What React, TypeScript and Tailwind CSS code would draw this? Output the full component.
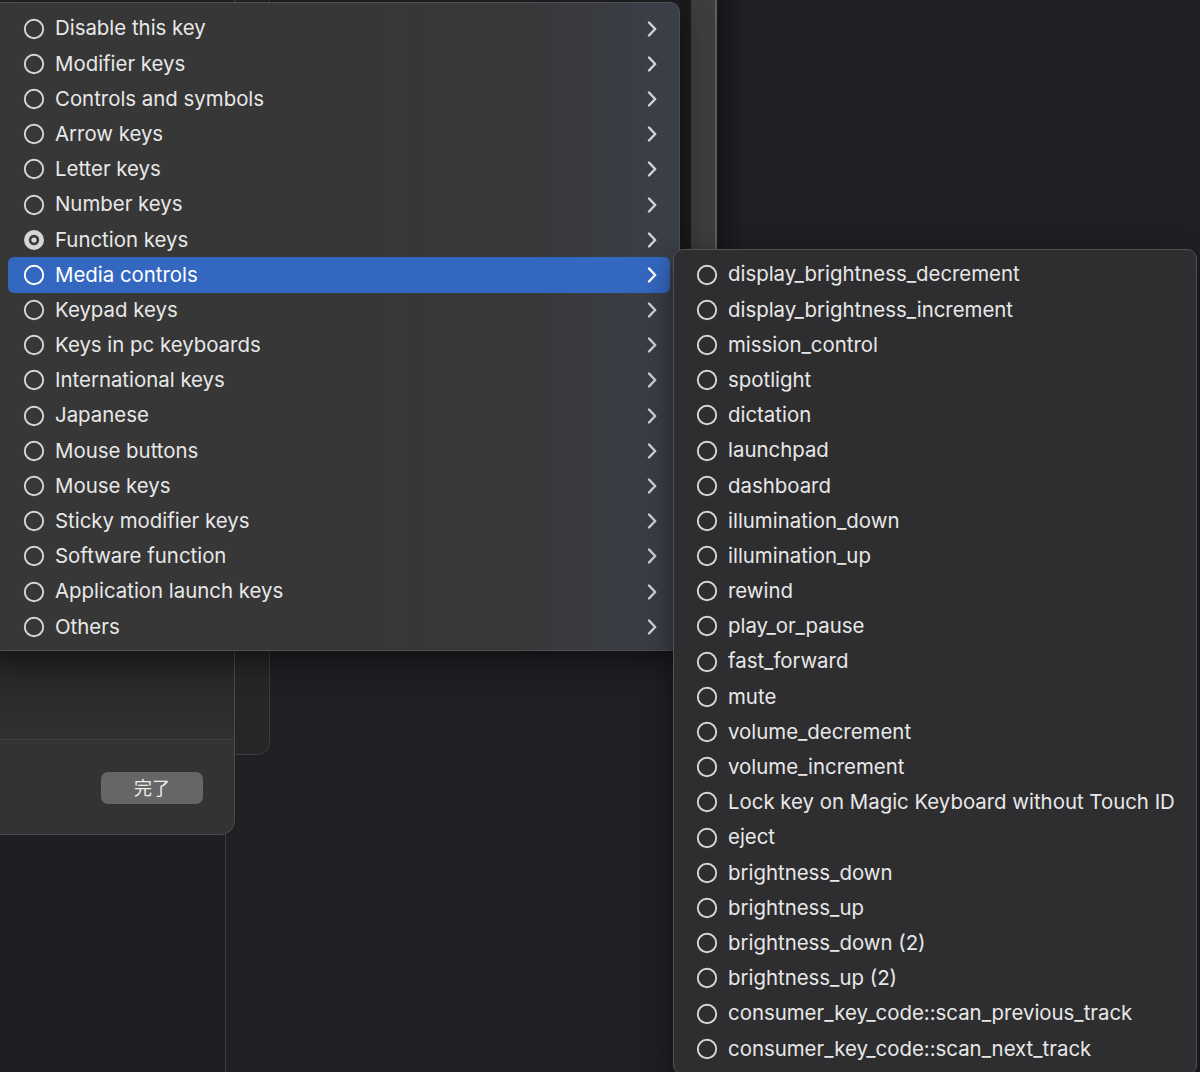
const mainItems = [
  "Disable this key",
  "Modifier keys",
  "Controls and symbols",
  "Arrow keys",
  "Letter keys",
  "Number keys",
  "Function keys",
  "Media controls",
  "Keypad keys",
  "Keys in pc keyboards",
  "International keys",
  "Japanese",
  "Mouse buttons",
  "Mouse keys",
  "Sticky modifier keys",
  "Software function",
  "Application launch keys",
  "Others",
];

const mediaItems = [
  "display_brightness_decrement",
  "display_brightness_increment",
  "mission_control",
  "spotlight",
  "dictation",
  "launchpad",
  "dashboard",
  "illumination_down",
  "illumination_up",
  "rewind",
  "play_or_pause",
  "fast_forward",
  "mute",
  "volume_decrement",
  "volume_increment",
  "Lock key on Magic Keyboard without Touch ID",
  "eject",
  "brightness_down",
  "brightness_up",
  "brightness_down (2)",
  "brightness_up (2)",
  "consumer_key_code::scan_previous_track",
  "consumer_key_code::scan_next_track",
];

function Radio({ checked, light }: { checked?: boolean; light?: boolean }) {
  const c = light ? "#ffffff" : "#d6d6d6";
  return (
    <svg width="22" height="22" viewBox="0 0 22 22" className="shrink-0">
      {checked ? (
        <>
          <circle cx="11" cy="11" r="10" fill={c} />
          <circle cx="11" cy="11" r="5.2" fill="#3a3a3a" />
          <circle cx="11" cy="11" r="2.6" fill={c} />
        </>
      ) : (
        <circle cx="11" cy="11" r="9.2" fill="none" stroke={c} strokeWidth="1.9" />
      )}
    </svg>
  );
}

function Chevron({ light }: { light?: boolean }) {
  return (
    <svg width="12" height="16" viewBox="0 0 12 16" className="shrink-0">
      <path
        d="M3 1.5 L9.2 8 L3 14.5"
        fill="none"
        stroke={light ? "#ffffff" : "#d4d4d4"}
        strokeWidth="2.4"
        strokeLinecap="round"
        strokeLinejoin="round"
      />
    </svg>
  );
}

export default function App() {
  return (
    <main
      className="relative h-[1072px] w-[1200px] overflow-hidden bg-[#1f2024] text-[20.4px]"
      style={{ fontFamily: 'Inter, "Noto Sans CJK JP", sans-serif' }}
    >
      {/* background window on the far left */}
      <div className="absolute left-0 top-0 h-full w-[226px] border-r border-[#3a3b3e] bg-[#1e1f22]" />

      {/* window strip behind the menus */}
      <div className="absolute left-[680px] top-0 flex h-[252px] w-[37px]">
        <div className="w-[11px] bg-[#1b1b1b]" />
        <div className="flex-1 border-r-2 border-[#5e5e5e] bg-[#3e3e3e]" />
      </div>
      <div className="absolute left-[717px] top-0 h-[252px] w-[30px] bg-gradient-to-r from-[#15161a] to-[#1f2024]" />

      {/* sheet behind the dialog */}
      <div className="absolute -left-[10px] -top-[10px] h-[765px] w-[280px] rounded-br-[12px] border border-[#3e3e3e] bg-[#262626]" />

      {/* dialog with done button */}
      <div className="absolute -left-[10px] -top-[10px] flex h-[845px] w-[245px] flex-col overflow-hidden rounded-br-[14px] border border-[#4a4a4a] bg-[#333333]">
        <div className="h-[748px] bg-gradient-to-b from-[#232323] from-85% to-[#303030]" />
        <div className="h-px bg-[#3d3d3d]" />
        <div className="flex flex-1 items-start justify-end pr-[31px] pt-[32px]">
          <button className="h-[32px] w-[102px] rounded-[7px] bg-[#666666] text-[18px] text-[#ececec]">
            完了
          </button>
        </div>
      </div>

      {/* main menu */}
      <div className="absolute -left-[12px] top-[2px] w-[692px] rounded-[10px] border border-[#505050] bg-gradient-to-r from-[#373737] from-75% to-[#3b3f49] pb-[6px] pt-[8px] shadow-[0_10px_30px_rgba(0,0,0,0.5)]">
        {mainItems.map((item) => {
          const active = item === "Media controls";
          return (
            <div
              key={item}
              className={`ml-[19px] mr-[9px] flex h-[35.2px] items-center rounded-[6px] pl-[15px] pr-[12px] ${
                active ? "bg-[#3468c0] text-white" : "text-[#e8e8e8]"
              }`}
            >
              <Radio checked={item === "Function keys"} light={active} />
              <span className="ml-[10px] flex-1 leading-none">{item}</span>
              <Chevron light={active} />
            </div>
          );
        })}
      </div>

      {/* media controls submenu */}
      <div className="absolute left-[673px] top-[249px] w-[524px] rounded-[10px] border border-[#525252] bg-[#2e2e30] pb-[8px] pt-[7px] shadow-[0_10px_30px_rgba(0,0,0,0.5)]">
        {mediaItems.map((item) => (
          <div
            key={item}
            className="flex h-[35.2px] items-center pl-[22px] text-[#e8e8e8]"
          >
            <Radio />
            <span className="ml-[10px] leading-none">{item}</span>
          </div>
        ))}
      </div>
    </main>
  );
}
